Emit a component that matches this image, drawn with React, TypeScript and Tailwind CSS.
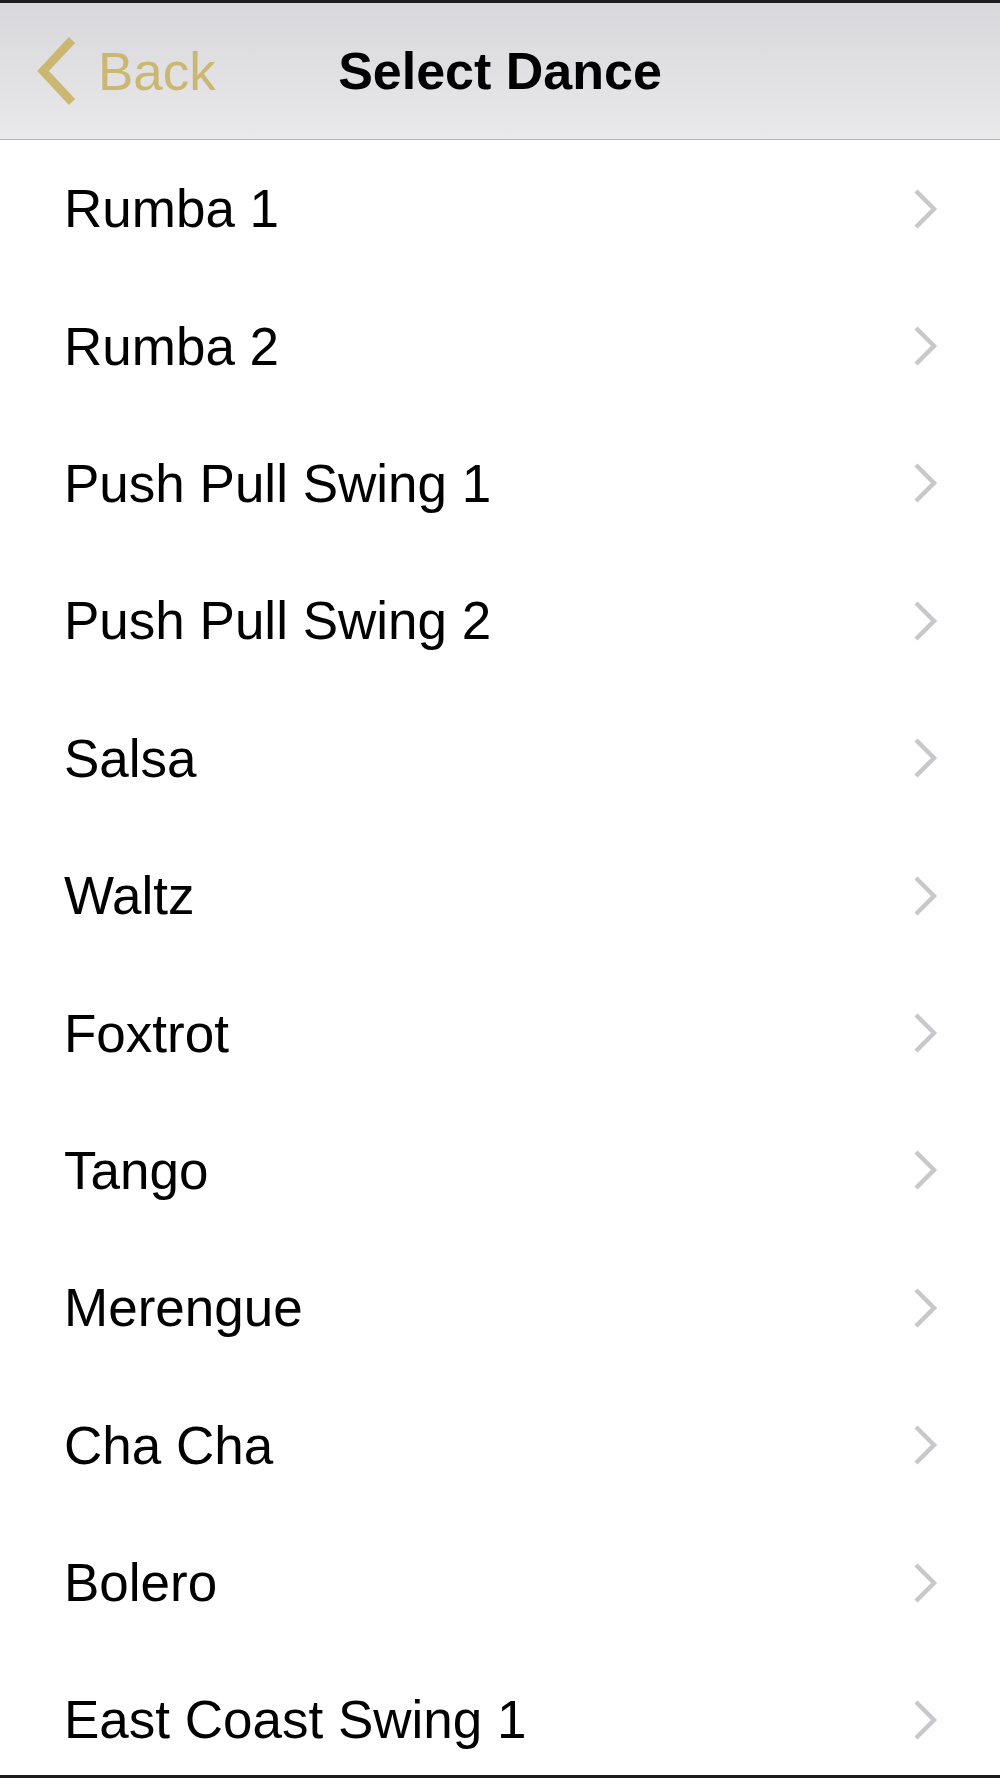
import React from 'react';

const dances = [
  'Rumba 1',
  'Rumba 2',
  'Push Pull Swing 1',
  'Push Pull Swing 2',
  'Salsa',
  'Waltz',
  'Foxtrot',
  'Tango',
  'Merengue',
  'Cha Cha',
  'Bolero',
  'East Coast Swing 1',
];

function BackChevron() {
  return (
    <svg width="44" height="70" viewBox="0 0 44 70" className="shrink-0">
      <path d="M38 4 L9 35 L38 66" fill="none" stroke="#cbb772" strokeWidth="8.5" strokeLinecap="butt" strokeLinejoin="miter" />
    </svg>
  );
}

function RowChevron() {
  return (
    <svg width="28" height="42" viewBox="0 0 28 42" className="shrink-0">
      <path d="M4 3 L22 21 L4 39" fill="none" stroke="#c7c7cc" strokeWidth="4.5" strokeLinecap="butt" strokeLinejoin="miter" />
    </svg>
  );
}

export default function App() {
  return (
    <div
      className="flex h-[1778px] w-[1000px] flex-col overflow-hidden bg-white"
      style={{ fontFamily: '"Liberation Sans", Arial, sans-serif' }}
    >
      {/* 顶部导航栏 */}
      <header className="relative flex h-[140px] shrink-0 items-center border-t-[3px] border-b border-t-[#1c1c1c] border-b-[#b4b4b8] bg-gradient-to-b from-[#d8d8dc] to-[#e9e9eb]">
        <div className="flex items-center pl-[34px]">
          <BackChevron />
          <span className="ml-[20px] text-[53px] leading-none text-[#cbb772]">Back</span>
        </div>
        <h1 className="absolute left-0 right-0 text-center text-[52px] font-bold leading-none text-black">
          Select Dance
        </h1>
      </header>

      {/* 列表 */}
      <ul className="flex-1 overflow-hidden">
        {dances.map((name) => (
          <li key={name} className="flex h-[137.4px] items-center justify-between pl-[64px] pr-[60px]">
            <span className="text-[53px] leading-none text-black">{name}</span>
            <RowChevron />
          </li>
        ))}
      </ul>

      <div className="h-[3px] shrink-0 bg-[#1c1c1c]" />
    </div>
  );
}
